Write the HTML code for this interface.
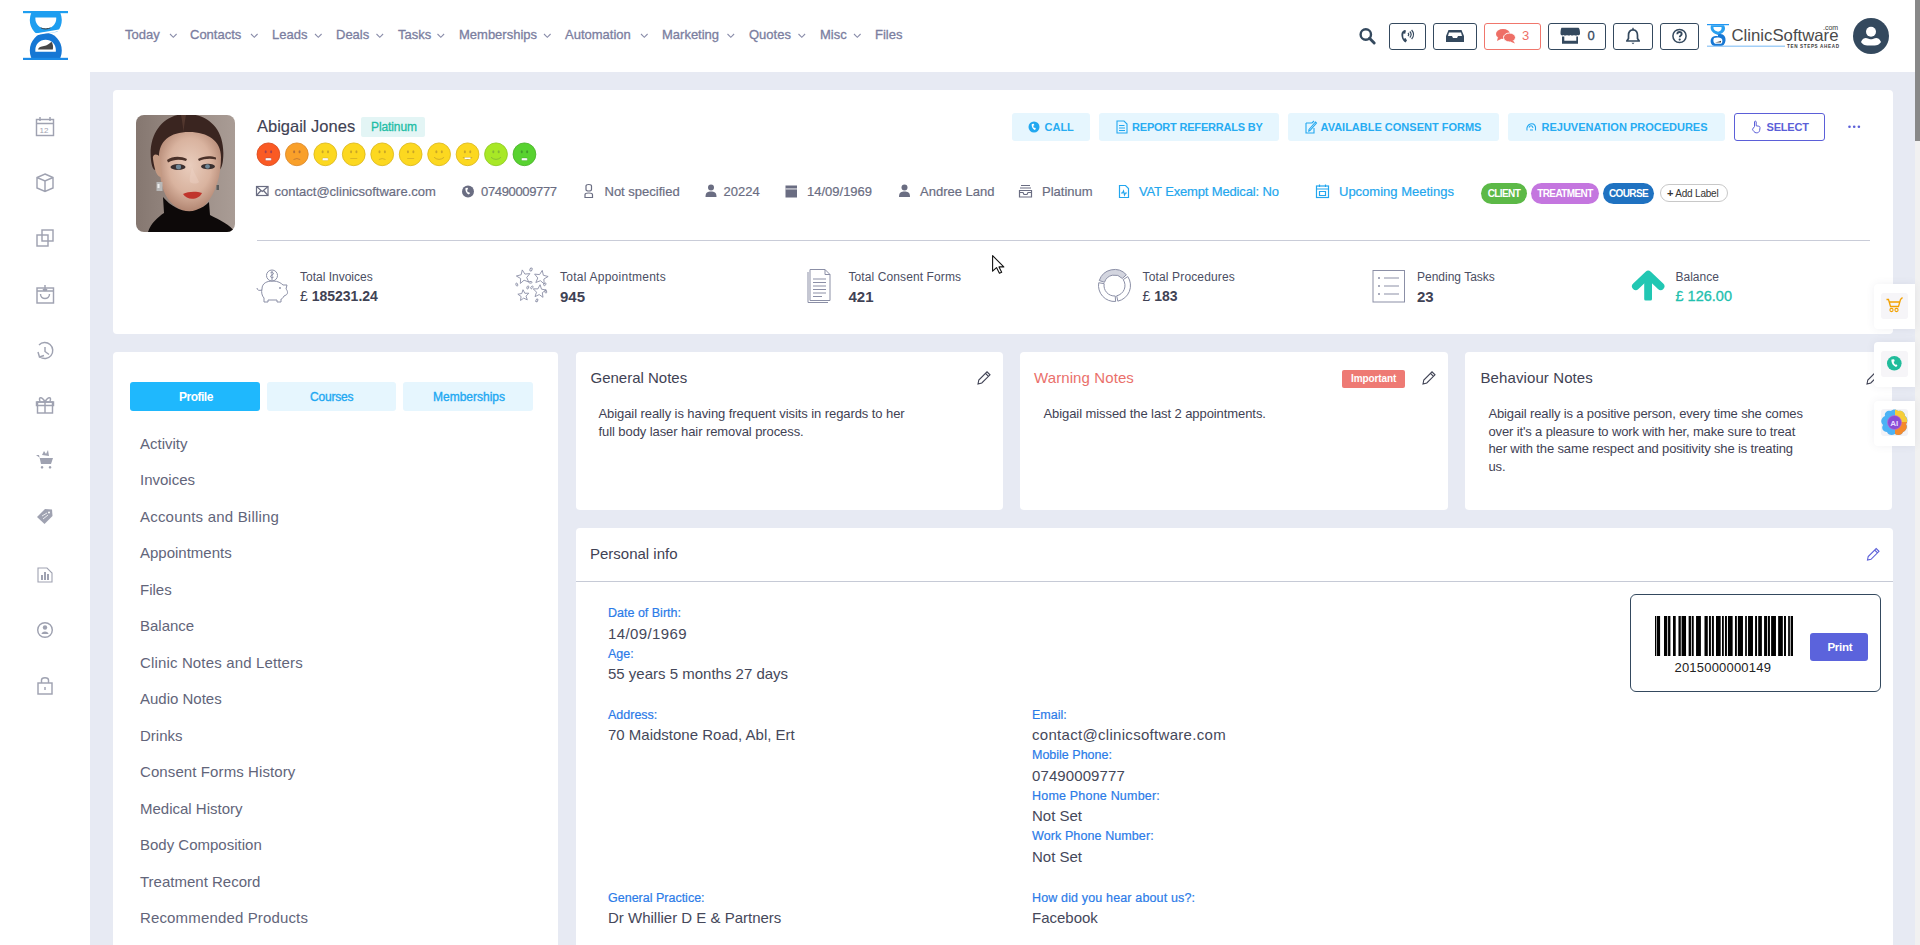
<!DOCTYPE html>
<html><head><meta charset="utf-8">
<style>
*{box-sizing:border-box;margin:0;padding:0}
html,body{width:1920px;height:945px;overflow:hidden;background:#e7eaf3;font-family:"Liberation Sans",sans-serif;color:#3f4254}
.a{position:absolute}
.t{position:absolute;white-space:nowrap;line-height:1}
#hdr{left:0;top:0;width:1915px;height:72px;background:#fff}
#side{left:0;top:72px;width:90px;height:873px;background:#fff}
#sb{left:1915px;top:0;width:5px;height:945px;background:#f1f1f1}
#sbt{left:1915px;top:0;width:5px;height:141px;background:#888}
.nav{color:#7b7ea0;font-size:13px;top:28px;-webkit-text-stroke:0.3px #7b7ea0}
.chev{position:absolute;top:33px;width:9px;height:5px}
.hb{position:absolute;top:23px;height:27px;border:1.5px solid #34495e;border-radius:3px}
.card{position:absolute;background:#fff;border-radius:4px}
.btn{position:absolute;top:113px;height:28px;background:#e6f6fe;border-radius:3px}
.bt{color:#27acf2;font-size:11px;top:122px;font-weight:700}
.info{color:#6a6d82;font-size:13px;top:185px;-webkit-text-stroke:0.2px currentColor}
.pill{position:absolute;top:183px;height:21px;border-radius:11px;color:#fff;font-size:10px;font-weight:700;line-height:21px;text-align:center;letter-spacing:-0.6px}
.sl{color:#4b4e63;font-size:12px;top:271px}
.sv{color:#3f4254;font-size:15px;top:289px;font-weight:700}
.li{color:#62657a;font-size:15px;left:140px;margin-top:-1px}
.nt{color:#3f4254;font-size:15px;top:370px}
.nb{color:#3f4254;font-size:13px;line-height:17.6px;position:absolute;white-space:nowrap}
.lab{color:#2b7be8;font-size:12.5px;-webkit-text-stroke:0.2px #2b7be8}
.val{color:#45485a;font-size:15px;margin-top:-1px}
</style></head>
<body>
<div id="hdr" class="a"></div>
<div id="side" class="a"></div>
<div id="sb" class="a"></div>
<div id="sbt" class="a"></div>
<!-- logo -->
<svg class="a" style="left:0;top:0" width="90" height="72" viewBox="0 0 90 72">
<defs><clipPath id="lc1"><rect x="0" y="13" width="90" height="45"/></clipPath>
<clipPath id="lc2"><path d="M0,13 L90,13 L90,30 L0,35.5 Z"/></clipPath></defs>
<g clip-path="url(#lc1)">
<path fill-rule="evenodd" fill="#1677d4" d="M29.8,50.6 A16,17.6 0 1 0 61.8,50.6 A16,17.6 0 1 0 29.8,50.6 Z M35.4,51.7 L55.8,51.7 C56.5,45 52,39.8 45.6,39.8 C39.2,39.8 34.7,45 35.4,51.7 Z"/>
<g clip-path="url(#lc2)">
<path fill-rule="evenodd" fill="#1e9ef0" d="M29.8,20.1 A16,16.9 0 1 0 61.8,20.1 A16,16.9 0 1 0 29.8,20.1 Z M35.4,17.4 L56.2,17.4 C56.8,24 52,28.5 45.8,28.5 C39.6,28.5 34.8,24 35.4,17.4 Z"/>
</g>
<path d="M28,35.6 L62,29.9" stroke="#fff" stroke-width="1.6"/>
</g>
<rect x="23" y="11" width="45" height="2.2" fill="#1e9ef0"/>
<rect x="23" y="57.8" width="45" height="2.2" fill="#1b8ae6"/>
<path d="M40.5,27.2 C43.5,28.8 48,28.8 50.7,27.2 L50,28.6 C47,29.8 44,29.8 41.2,28.6 Z" fill="#444"/>
<path d="M38,49.6 C38.5,47 41,46.5 44,46 C47,45.5 49,44 51.5,41.8 C53,44 53.5,47 52.8,49.6 Z" fill="#474747"/>
</svg>
<!-- nav -->
<div class="t nav" style="left:125px">Today</div>
<div class="t nav" style="left:190px">Contacts</div>
<div class="t nav" style="left:272px">Leads</div>
<div class="t nav" style="left:336px">Deals</div>
<div class="t nav" style="left:398px">Tasks</div>
<div class="t nav" style="left:459px">Memberships</div>
<div class="t nav" style="left:565px">Automation</div>
<div class="t nav" style="left:662px">Marketing</div>
<div class="t nav" style="left:749px">Quotes</div>
<div class="t nav" style="left:820px">Misc</div>
<div class="t nav" style="left:875px">Files</div>
<svg class="a" style="left:0;top:0" width="880" height="72" viewBox="0 0 880 72" fill="none" stroke="#8a8daa" stroke-width="1.1">
<path d="M170,34 L173.3,37.3 L176.6,34"/><path d="M251,34 L254.3,37.3 L257.6,34"/><path d="M315,34 L318.3,37.3 L321.6,34"/>
<path d="M376.5,34 L379.8,37.3 L383.1,34"/><path d="M437.5,34 L440.8,37.3 L444.1,34"/><path d="M544,34 L547.3,37.3 L550.6,34"/>
<path d="M641,34 L644.3,37.3 L647.6,34"/><path d="M727.5,34 L730.8,37.3 L734.1,34"/><path d="M798.5,34 L801.8,37.3 L805.1,34"/>
<path d="M854,34 L857.3,37.3 L860.6,34"/>
</svg>
<!-- search -->
<svg class="a" style="left:1356px;top:26px" width="22" height="20" viewBox="0 0 22 20">
<circle cx="9.8" cy="8.5" r="5.2" fill="none" stroke="#34495e" stroke-width="2.4"/>
<path d="M13.5,12.3 L18.2,17" stroke="#34495e" stroke-width="2.9" stroke-linecap="round"/>
</svg>
<div class="hb" style="left:1389px;width:37px"></div>
<svg class="a" style="left:1396px;top:27px" width="22" height="18" viewBox="0 0 22 18">
<path d="M8.5,3 C6,4 5,6 5.5,9 C6,12 7.5,14.5 9.5,15.5 L11,13.5 L9.5,11 L8,11.8 C7.2,10.5 7,8 7.5,6.5 L9.2,6.7 L10,3.5 Z" fill="#34495e"/>
<path d="M12,6 Q13.5,7.5 12,9" stroke="#34495e" stroke-width="1.2" fill="none"/>
<path d="M13.8,4.5 Q16.5,7.5 13.8,10.5" stroke="#34495e" stroke-width="1.2" fill="none"/>
<path d="M15.6,3 Q19.5,7.5 15.6,12" stroke="#34495e" stroke-width="1.2" fill="none"/>
</svg>
<div class="hb" style="left:1433px;width:44px"></div>
<svg class="a" style="left:1444px;top:28px" width="22" height="16" viewBox="0 0 22 16">
<path d="M4.5,2 L17.5,2 L20,8 L20,14 L2,14 L2,8 Z" fill="#34495e"/>
<path d="M5,4.5 L17,4.5 L18,8 L14,8 L13,10 L9,10 L8,8 L4,8 Z" fill="#fff"/>
</svg>
<div class="hb" style="left:1484px;width:57px;border-color:#f0766c"></div>
<svg class="a" style="left:1495px;top:27px" width="22" height="18" viewBox="0 0 22 18">
<ellipse cx="8" cy="7" rx="7" ry="5" fill="#ee6f66"/><path d="M3,10 L2,14 L7,11.5Z" fill="#ee6f66"/>
<ellipse cx="14.5" cy="10.5" rx="6" ry="4.5" fill="#ee6f66" stroke="#fff" stroke-width="1"/><path d="M18,13.5 L20,16.5 L15,14.5Z" fill="#ee6f66"/>
</svg>
<div class="t" style="left:1522px;top:29px;font-size:13px;color:#ee6f66">3</div>
<div class="hb" style="left:1548px;width:58px"></div>
<svg class="a" style="left:1555px;top:25px" width="30" height="22" viewBox="1555 25 30 22">
<path d="M1561.5,27.8 L1578.5,27.8 C1579.5,28 1580,31 1580,33.5 C1580,35.2 1578.5,35.8 1577.5,35 C1576.5,35.8 1575,35.8 1574,35 C1573,35.8 1571.5,35.8 1570.5,35 C1569.5,35.8 1568,35.8 1567,35 C1566,35.8 1564.5,35.8 1563.5,35 C1562.5,35.8 1560.5,35.5 1560.5,33.5 C1560.5,31 1561,28 1561.5,27.8Z" fill="#34495e"/>
<path d="M1562,36.5 L1564.3,36.5 L1564.3,40.7 L1576.3,40.7 L1576.3,36.5 L1578,36.5 L1578,43.8 L1562,43.8Z" fill="#34495e"/>
</svg>
<div class="t" style="left:1587.5px;top:29px;font-size:13px;color:#34495e;-webkit-text-stroke:0.3px #34495e">0</div>
<div class="hb" style="left:1613px;width:40px"></div>
<svg class="a" style="left:1624px;top:27px" width="18" height="19" viewBox="0 0 18 19">
<path d="M9,2.8 C5.8,2.8 4.5,5.5 4.5,8.5 L4.5,11.5 L2.8,14 L15.2,14 L13.5,11.5 L13.5,8.5 C13.5,5.5 12.2,2.8 9,2.8 Z" fill="none" stroke="#34495e" stroke-width="1.7" stroke-linejoin="round"/>
<path d="M7.5,15.8 L10.5,15.8 L9,17.3 Z" fill="#34495e"/><rect x="8.3" y="0.8" width="1.4" height="2" fill="#34495e"/>
</svg>
<div class="hb" style="left:1660px;width:39px"></div>
<svg class="a" style="left:1670px;top:27px" width="18" height="18" viewBox="0 0 18 18">
<circle cx="9.5" cy="9" r="6.6" fill="none" stroke="#34495e" stroke-width="1.5"/>
<path d="M7.3,7.2 C7.3,5.6 8.5,5 9.5,5 C10.8,5 11.7,5.8 11.7,7 C11.7,8.5 9.7,8.6 9.7,10.3" fill="none" stroke="#34495e" stroke-width="1.8"/>
<circle cx="9.7" cy="12.6" r="1.1" fill="#34495e"/>
</svg>
<!-- clinicsoftware logo -->
<svg class="a" style="left:1706px;top:20px" width="136" height="32" viewBox="0 0 136 32">
<g transform="translate(0,4) scale(1,0.88) translate(0,-3)"><rect x="1" y="3" width="22" height="1.4" fill="#2196f3"/>
<path d="M5,4.4 L18,4.4 C20,8 19,12 15,14 L12,15.5 L9,14 C5,12 4,8 5,4.4Z" fill="#2aa0f0"/>
<path d="M7.5,6.5 L15.5,6.5 C16,9 15,11 12,11.8 C9,11 7,9 7.5,6.5Z" fill="#fff"/>
<path d="M12,15 C17,13 20,17 19.5,22 C19,26 17,28 15,28 L8,28 C5,27 4,23 5,20 C6,17 9,16 12,17Z" fill="#1677d4"/>
<path d="M8,19 C10,18 14,18 16,20 C17,23 16,25 15,25.5 L9,25.5 C7,24 7,21 8,19Z" fill="#fff"/>
<path d="M9,24 L15,24 L15,22 L13,23 Z" fill="#444"/>
</g><rect x="1" y="25.6" width="78" height="1.2" fill="#8cc4f5"/>
<text x="25.5" y="21" font-family="Liberation Sans" font-size="16.5" fill="#4a4a4a" textLength="107" lengthAdjust="spacingAndGlyphs">ClinicSoftware</text>
<text x="117" y="10" font-family="Liberation Sans" font-size="7" fill="#3a3a3a">.com</text>
<text x="81" y="27.8" font-family="Liberation Sans" font-size="4.6" font-weight="700" fill="#3a3a3a" textLength="52" lengthAdjust="spacing">TEN STEPS AHEAD</text>
</svg>
<!-- avatar -->
<svg class="a" style="left:1853px;top:18px" width="36" height="36" viewBox="0 0 36 36">
<circle cx="18" cy="18" r="18" fill="#34495e"/>
<circle cx="18" cy="13.8" r="5" fill="#fff"/>
<path d="M8,24 C10,19.5 13,19.5 15,20.5 C16,21.5 20,21.5 21,20.5 C23,19.5 26,19.5 28,24 C26,27 24,27.5 18,27.5 C12,27.5 10,27 8,24Z" fill="#fff"/>
</svg>

<!-- profile card -->
<div class="card" style="left:113px;top:90px;width:1780px;height:244px"></div>
<svg class="a" style="left:136px;top:115px" width="99" height="117" viewBox="0 0 99 117">
<defs><clipPath id="pc"><rect x="0" y="0" width="99" height="117" rx="8"/></clipPath>
<linearGradient id="pbg" x1="0" y1="0" x2="1" y2="0"><stop offset="0" stop-color="#857770"/><stop offset="0.5" stop-color="#9a8c85"/><stop offset="1" stop-color="#a99c95"/></linearGradient>
<radialGradient id="skin" cx="0.5" cy="0.42" r="0.62"><stop offset="0" stop-color="#e9cdbd"/><stop offset="0.55" stop-color="#d9b39f"/><stop offset="1" stop-color="#a97c68"/></radialGradient></defs>
<g clip-path="url(#pc)">
<rect width="99" height="117" fill="url(#pbg)"/>
<path d="M15,45 C12,18 28,-1 50,-1 C74,-1 90,16 87,45 C86,54 83,58 80,52 L22,52 C19,58 16,54 15,45Z" fill="#3a2520"/>
<path d="M45,0 L50,0 C49,6 48,11 47.5,17 C47,11 46,6 45,0Z" fill="#6a4a3c" opacity="0.5"/>
<path d="M23,42 C23,26 34,17 53,17 C72,17 85,26 85,42 C85,60 80,78 70,89 C63,96 56,98 52,97 C46,96 38,92 32,84 C25,74 23,58 23,42Z" fill="url(#skin)"/>
<path d="M17,44 C16,39 21,38 24,42 L26,62 C22,63 19,58 17,44Z" fill="#c49a83"/>
<path d="M31,45 C37,40.5 45,41 51,44 L50,46 C44,44 38,44 32,47.5Z" fill="#4a3129"/>
<path d="M62,44 C68,40.5 75,40.5 80,42.5 L80,44.5 C75,43 68,43.5 63,46Z" fill="#4a3129"/>
<ellipse cx="42" cy="52" rx="7.5" ry="3" fill="#3a3030"/><ellipse cx="42.5" cy="52" rx="2.6" ry="2.4" fill="#6f8797"/>
<ellipse cx="72" cy="51.5" rx="7" ry="2.8" fill="#3a3030"/><ellipse cx="71.5" cy="51.5" rx="2.4" ry="2.3" fill="#6f8797"/>
<path d="M56,52 C55,58 53,63 54,67 C57,69 61,69 63,67 C61,62 58,58 56,52Z" fill="#f0d8ca" opacity="0.35"/>
<path d="M47,79 C52,76.5 60,76 66,78 C63,85 51,86 47,79Z" fill="#c0352c"/>
<path d="M20.5,67 L26.5,67 L26.5,76 L20.5,76Z" fill="#b8b8b8"/><rect x="21.5" y="69" width="2" height="4" fill="#eee"/>
<rect x="80.5" y="70" width="2.5" height="5" fill="#5a5a5a"/>
<path d="M27,82 C36,93 50,99 60,95 C66,93 70,90 73,87 L74,100 C84,105 94,110 99,117 L12,117 C15,108 22,102 28,98Z" fill="#0d0909"/>
</g></svg>
<div class="t" style="left:257px;top:118px;font-size:16.5px;color:#3f4254;-webkit-text-stroke:0.15px #3f4254">Abigail Jones</div>
<div class="a" style="left:361px;top:117px;width:64px;height:20px;background:#e3f5f5;border-radius:2px"></div>
<div class="t" style="left:371px;top:121px;font-size:12px;color:#1fbda5;letter-spacing:-0.1px;-webkit-text-stroke:0.3px #1fbda5">Platinum</div>
<svg class="a" style="left:250px;top:138px" width="300" height="32" viewBox="250 138 300 32"><circle cx="268.40" cy="154.3" r="11.4" fill="#fa5a24" stroke="#d8471a" stroke-width="0.8"/><ellipse cx="265.70" cy="151.8" rx="1" ry="1.5" fill="#8a3a5a" opacity="0.75"/><ellipse cx="271.10" cy="151.8" rx="1" ry="1.5" fill="#8a3a5a" opacity="0.75"/><rect x="265.40" y="158" width="6" height="2.4" rx="1" fill="#fff" stroke="#8a3a5a" stroke-width="0.5" stroke-opacity="0.6"/><circle cx="296.85" cy="154.3" r="11.4" fill="#f9a02a" stroke="#d9862a" stroke-width="0.8"/><ellipse cx="294.15" cy="151.8" rx="1" ry="1.5" fill="#a0603a" opacity="0.75"/><ellipse cx="299.55" cy="151.8" rx="1" ry="1.5" fill="#a0603a" opacity="0.75"/><path d="M293.55,159.5 Q296.85,157.6 300.15,159.5" fill="none" stroke="#a0603a" stroke-width="0.8" opacity="0.7"/><circle cx="325.30" cy="154.3" r="11.4" fill="#fcd820" stroke="#d9b51a" stroke-width="0.8"/><ellipse cx="322.60" cy="151.8" rx="1" ry="1.5" fill="#b8962a" opacity="0.75"/><ellipse cx="328.00" cy="151.8" rx="1" ry="1.5" fill="#b8962a" opacity="0.75"/><rect x="322.30" y="158" width="6" height="2.4" rx="1" fill="#fff" stroke="#b8962a" stroke-width="0.5" stroke-opacity="0.6"/><circle cx="353.75" cy="154.3" r="11.4" fill="#fcd820" stroke="#d9b51a" stroke-width="0.8"/><ellipse cx="351.05" cy="151.8" rx="1" ry="1.5" fill="#b8962a" opacity="0.75"/><ellipse cx="356.45" cy="151.8" rx="1" ry="1.5" fill="#b8962a" opacity="0.75"/><path d="M350.25,158.5 L357.25,158.5" fill="none" stroke="#b8962a" stroke-width="0.8" opacity="0.6"/><circle cx="382.20" cy="154.3" r="11.4" fill="#fcd820" stroke="#d9b51a" stroke-width="0.8"/><ellipse cx="379.50" cy="151.8" rx="1" ry="1.5" fill="#b8962a" opacity="0.75"/><ellipse cx="384.90" cy="151.8" rx="1" ry="1.5" fill="#b8962a" opacity="0.75"/><path d="M378.90,159.5 Q382.20,157.6 385.50,159.5" fill="none" stroke="#b8962a" stroke-width="0.8" opacity="0.7"/><circle cx="410.65" cy="154.3" r="11.4" fill="#fcd820" stroke="#d9b51a" stroke-width="0.8"/><ellipse cx="407.95" cy="151.8" rx="1" ry="1.5" fill="#b8962a" opacity="0.75"/><ellipse cx="413.35" cy="151.8" rx="1" ry="1.5" fill="#b8962a" opacity="0.75"/><path d="M407.15,158.5 L414.15,158.5" fill="none" stroke="#b8962a" stroke-width="0.8" opacity="0.6"/><circle cx="439.10" cy="154.3" r="11.4" fill="#fcd820" stroke="#d9b51a" stroke-width="0.8"/><ellipse cx="436.40" cy="151.8" rx="1" ry="1.5" fill="#b8962a" opacity="0.75"/><ellipse cx="441.80" cy="151.8" rx="1" ry="1.5" fill="#b8962a" opacity="0.75"/><path d="M434.10,157.3 Q439.10,161.5 444.10,157.3" fill="none" stroke="#b8962a" stroke-width="0.9" opacity="0.7"/><circle cx="467.55" cy="154.3" r="11.4" fill="#fcd820" stroke="#d9b51a" stroke-width="0.8"/><ellipse cx="464.85" cy="151.8" rx="1" ry="1.5" fill="#b8962a" opacity="0.75"/><ellipse cx="470.25" cy="151.8" rx="1" ry="1.5" fill="#b8962a" opacity="0.75"/><path d="M462.55,157.2 Q467.55,163 472.55,157.2 Z" fill="#b8962a" opacity="0.8"/><rect x="464.55" y="157.5" width="6" height="1.6" fill="#fff"/><circle cx="496.00" cy="154.3" r="11.4" fill="#a8e826" stroke="#8cc81e" stroke-width="0.8"/><ellipse cx="493.30" cy="151.8" rx="1" ry="1.5" fill="#78a83a" opacity="0.75"/><ellipse cx="498.70" cy="151.8" rx="1" ry="1.5" fill="#78a83a" opacity="0.75"/><path d="M491.00,157.3 Q496.00,161.5 501.00,157.3" fill="none" stroke="#78a83a" stroke-width="0.9" opacity="0.7"/><circle cx="524.45" cy="154.3" r="11.4" fill="#58d230" stroke="#46b026" stroke-width="0.8"/><ellipse cx="521.75" cy="151.8" rx="1" ry="1.5" fill="#3a8a2a" opacity="0.75"/><ellipse cx="527.15" cy="151.8" rx="1" ry="1.5" fill="#3a8a2a" opacity="0.75"/><rect x="521.45" y="158" width="6" height="2.4" rx="1" fill="#fff" stroke="#3a8a2a" stroke-width="0.5" stroke-opacity="0.6"/></svg>
<!-- info row -->
<svg class="a" style="left:250px;top:180px" width="1090" height="24" viewBox="250 180 1090 24">
<g fill="none" stroke="#6a6d82" stroke-width="1.2">
<rect x="256.5" y="186.5" width="11.5" height="9"/><path d="M256.5,186.5 L262.25,191.5 L268,186.5 M256.5,195.5 L261,190.5 M268,195.5 L263.5,190.5"/>
<path d="M586,186 C586,184 591.5,184 591.5,186 L591.5,189.5 C591.5,191.5 586,191.5 586,189.5Z M585,197.5 L585,194.5 C585,192.5 592.5,192.5 592.5,194.5 L592.5,197.5Z"/>
<path d="M1020,188 L1031,188 M1021,185.5 L1030,185.5 M1019.5,190.5 L1031.5,190.5 L1031.5,197 L1019.5,197Z M1019.5,192.5 L1023,192.5 L1024,194.5 L1027,194.5 L1028,192.5 L1031.5,192.5"/>
</g>
<g fill="#6a6d82">
<circle cx="468" cy="191.5" r="6"/>
<circle cx="711" cy="187.5" r="3"/><path d="M705.5,197 C705.5,192 708,191.5 711,191.5 C714,191.5 716.5,192 716.5,197Z"/>
<rect x="785.5" y="185.5" width="11.5" height="12"/>
<circle cx="904.5" cy="187.5" r="3"/><path d="M899,197 C899,192 901.5,191.5 904.5,191.5 C907.5,191.5 910,192 910,197Z"/>
</g>
<path d="M465.5,188 C465,190 466,193 468.5,194.5 L470,193.5 L469,192 L468,192.5 C467.3,191.5 467,190.5 467.2,189.5 L468.2,189.2 L467.6,187.7Z" fill="#fff"/>
<rect x="785.5" y="188.5" width="11.5" height="0.9" fill="#fff"/>
<g fill="none" stroke="#22a6ee" stroke-width="1.2">
<path d="M1119.5,185.5 L1125.5,185.5 L1128.5,188.5 L1128.5,197.5 L1119.5,197.5Z M1121,193 L1122.5,193 L1123.5,191 L1124.5,195 L1125.5,193 L1127,193"/>
<rect x="1316.5" y="186" width="12" height="11.5"/><path d="M1316.5,189 L1328.5,189 M1319.5,184.5 L1319.5,187 M1325.5,184.5 L1325.5,187 M1319.5,191.5 L1325.5,191.5 L1325.5,195.5 L1319.5,195.5Z"/>
</g>
</svg>
<div class="t info" style="left:274.5px">contact@clinicsoftware.com</div>
<div class="t info" style="left:481px;letter-spacing:-0.35px">07490009777</div>
<div class="t info" style="left:604.5px">Not specified</div>
<div class="t info" style="left:723.5px">20224</div>
<div class="t info" style="left:807px">14/09/1969</div>
<div class="t info" style="left:920px">Andree Land</div>
<div class="t info" style="left:1042px">Platinum</div>
<div class="t info" style="left:1139px;color:#22a6ee;letter-spacing:-0.15px">VAT Exempt Medical: No</div>
<div class="t info" style="left:1339px;color:#22a6ee">Upcoming Meetings</div>
<div class="pill" style="left:1481px;width:46px;background:#5cb947">CLIENT</div>
<div class="pill" style="left:1531px;width:68px;background:#c476df">TREATMENT</div>
<div class="pill" style="left:1603px;width:51px;background:#1f72c1">COURSE</div>
<div class="a" style="left:1660px;top:184px;width:68px;height:18px;border:1px solid #c8c8c8;border-radius:9px;background:#fff"></div>
<div class="t" style="left:1667px;top:188px;font-size:10px;color:#333;letter-spacing:-0.2px"><b style="font-size:11px">+</b> Add Label</div>
<!-- action buttons -->
<div class="btn" style="left:1012px;width:78px"></div>
<div class="btn" style="left:1099px;width:180px"></div>
<div class="btn" style="left:1288px;width:211px"></div>
<div class="btn" style="left:1508px;width:217px"></div>
<div class="a" style="left:1734px;top:113px;width:91px;height:28px;border:1.2px solid #5b5fd8;border-radius:3px"></div>
<svg class="a" style="left:1020px;top:115px" width="850" height="24" viewBox="1020 115 850 24">
<circle cx="1034" cy="127" r="5.5" fill="#22a8f0"/><path d="M1031.8,124 C1031.3,126 1032.3,128.8 1034.5,130 L1036,129 L1035,127.6 L1034,128 C1033.4,127.2 1033.2,126.3 1033.4,125.4 L1034.4,125.2 L1033.8,123.7Z" fill="#fff"/>
<g fill="none" stroke="#22a8f0" stroke-width="1.1">
<path d="M1117,121 L1124,121 L1127,124 L1127,133 L1117,133Z M1119,125.5 L1124.5,125.5 M1119,128 L1125,128 M1119,130.5 L1125,130.5"/>
<path d="M1306,123 L1312,123 L1314,121 M1306,123 L1306,133 L1314,133 L1314,128 M1309,129.5 L1315.5,122 L1316.5,123 L1310,130.5 L1308.8,131Z"/>
<path d="M1527,130.5 C1526,124 1534,121 1535.5,127 L1535.5,130.5 M1529,127.5 C1530,125 1532.5,125 1533,128 M1530,130 L1533,130"/>
</g>
<path d="M1754.5,126.5 L1754.5,122 C1754.5,120.8 1756.2,120.8 1756.2,122 L1756.2,125.8 L1758.8,126.2 C1760,126.4 1760,127.2 1760,128 L1759.6,130.6 C1759.2,132.2 1758,132.8 1756.8,132.8 L1756,132.8 C1754.8,132.8 1753,130.8 1752.5,129.2 Z" fill="none" stroke="#5b5fd8" stroke-width="1"/>
<g fill="#5b5fd8"><circle cx="1849.5" cy="126.8" r="1.3"/><circle cx="1854.2" cy="126.8" r="1.3"/><circle cx="1858.9" cy="126.8" r="1.3"/></g>
</svg>
<div class="t bt" style="left:1044.5px">CALL</div>
<div class="t bt" style="left:1132px;letter-spacing:-0.2px">REPORT REFERRALS BY</div>
<div class="t bt" style="left:1320.5px">AVAILABLE CONSENT FORMS</div>
<div class="t bt" style="left:1541.5px">REJUVENATION PROCEDURES</div>
<div class="t bt" style="left:1766.5px;color:#5b5fd8;letter-spacing:-0.2px">SELECT</div>
<div class="a" style="left:257px;top:240px;width:1613px;height:1px;background:#c9ccd8"></div>

<!-- stats -->
<svg class="a" style="left:250px;top:262px" width="1430" height="46" viewBox="250 262 1430 46">
<g fill="none" stroke="#8b8fa6" stroke-width="1">
<circle cx="272" cy="275.5" r="5.5"/><path d="M270.5,273 C270.5,272 273.5,272 273.5,273.5 C273.5,275 270.5,275 270.5,276.5 C270.5,278 273.5,278 273.5,277 M272,271 L272,280"/>
<path d="M262,289 C262,283 267,281 273,281 C278,281 281,283 283,285 L287,285 L286,289 C288,291 288,294 286,295 L284,296 C283,298 282,299 281,299 L281,302 L277,302 L277,300 L268,300 L268,302 L264,302 L264,298 C262,296 261,292 262,289Z"/>
<path d="M262,290 C259,291 257,290 257,288"/><circle cx="280" cy="288" r="0.6"/>
</g>
<g fill="none" stroke="#8b8fa6" stroke-width="0.9"><path d="M522.25,269.91 L524.92,274.09 L529.86,273.62 L526.71,277.45 L528.68,282.00 L524.06,280.19 L520.34,283.47 L520.64,278.52 L516.37,276.00 L521.17,274.75Z"/><path d="M542.25,270.41 L543.33,275.25 L548.13,276.50 L543.86,279.02 L544.16,283.97 L540.44,280.69 L535.82,282.50 L537.79,277.95 L534.64,274.12 L539.58,274.59Z"/><path d="M522.99,289.72 L524.84,293.26 L528.84,293.23 L526.04,296.09 L527.31,299.88 L523.73,298.10 L520.51,300.47 L521.10,296.52 L517.85,294.20 L521.79,293.53Z"/><path d="M540.09,284.73 L541.51,289.19 L546.13,289.97 L542.32,292.70 L543.00,297.33 L539.23,294.55 L535.04,296.63 L536.52,292.19 L533.24,288.84 L537.92,288.88Z"/><rect x="530" y="268" width="2" height="3" rx="1" transform="rotate(30 531 269.5)"/><rect x="529" y="281.5" width="3" height="1.6" rx="0.8"/><rect x="516" y="283" width="1.6" height="3" rx="0.8" transform="rotate(-20 517 284.5)"/><rect x="527" y="286" width="1.6" height="3" rx="0.8" transform="rotate(20 528 287.5)"/><rect x="531" y="286" width="1.6" height="3" rx="0.8" transform="rotate(40 532 287.5)"/><rect x="544" y="283" width="1.6" height="3" rx="0.8" transform="rotate(50 545 284.5)"/><rect x="545" y="290" width="1.6" height="3" rx="0.8" transform="rotate(-10 546 291.5)"/><rect x="536" y="299" width="1.6" height="3" rx="0.8" transform="rotate(30 537 300.5)"/></g>
<g fill="none" stroke="#8b8fa6" stroke-width="1">
<path d="M810,269.5 L825,269.5 L830,274.5 L830,300.5 L810,300.5Z M825,269.5 L825,274.5 L830,274.5"/>
<path d="M808,272 L808,302.5 L828,302.5" />
<path d="M813,279 L826,279 M813,282.5 L826,282.5 M813,286 L826,286 M813,289.5 L826,289.5 M813,293 L826,293 M813,296.5 L822,296.5"/>
</g>
<path d="M1099.28,280.56 A16,16 0 0 1 1126.39,274.79 L1122.30,278.47 A10.5,10.5 0 0 0 1104.51,282.26 Z" fill="#d3d5df" stroke="#8b8fa6" stroke-width="1"/><path d="M1127.76,276.55 A16,16 0 0 1 1117.83,301.15 L1116.68,295.77 A10.5,10.5 0 0 0 1123.20,279.63 Z" fill="none" stroke="#8b8fa6" stroke-width="1"/><path d="M1115.62,301.46 A16,16 0 0 1 1098.74,282.72 L1104.16,283.68 A10.5,10.5 0 0 0 1115.23,295.97 Z" fill="none" stroke="#8b8fa6" stroke-width="1"/>
<g fill="none" stroke="#8b8fa6" stroke-width="1">
<rect x="1373" y="270.5" width="31.5" height="31.5"/>
<path d="M1384,278 L1399,278 M1384,286 L1399,286 M1384,294 L1399,294"/>
</g>
<g fill="#8b8fa6"><circle cx="1379" cy="278" r="1"/><circle cx="1379" cy="286" r="1"/><circle cx="1379" cy="294" r="1"/></g>
<path d="M1635.8,286.3 L1648.2,274.6 L1660.6,286.3" fill="none" stroke="#22c7b3" stroke-width="7.6" stroke-linecap="round" stroke-linejoin="round"/><rect x="1644.2" y="276" width="7.8" height="24.6" rx="1.5" fill="#22c7b3"/>
</svg>
<div class="t sl" style="left:300px">Total Invoices</div>
<div class="t sv" style="left:300px;font-size:14px"><span style="font-weight:400">£</span> 185231.24</div>
<div class="t sl" style="left:560px;letter-spacing:0.25px">Total Appointments</div>
<div class="t sv" style="left:560px">945</div>
<div class="t sl" style="left:848.5px;letter-spacing:0.1px">Total Consent Forms</div>
<div class="t sv" style="left:848.5px">421</div>
<div class="t sl" style="left:1142.5px;letter-spacing:0.15px">Total Procedures</div>
<div class="t sv" style="left:1142.5px;font-size:14px"><span style="font-weight:400">£</span> 183</div>
<div class="t sl" style="left:1417px">Pending Tasks</div>
<div class="t sv" style="left:1417px">23</div>
<div class="t sl" style="left:1675.5px">Balance</div>
<div class="t sv" style="left:1675.5px;color:#22c0ae;font-weight:400;font-size:14.5px;-webkit-text-stroke:0.3px #22c0ae">£ 126.00</div>

<!-- sidebar icons -->
<svg class="a" style="left:0;top:100px" width="90" height="610" viewBox="0 100 90 610">
<g fill="none" stroke="#9fa2b1" stroke-width="1.45">
<rect x="36.5" y="119.5" width="17" height="16"/><path d="M36.5,123.5 L53.5,123.5 M40,117 L40,121 M50,117 L50,121"/>
<path d="M45,174 L53,177.5 L53,188 L45,191.5 L37,188 L37,177.5Z M37,177.5 L45,181 L53,177.5 M45,181 L45,191.5"/>
<rect x="37" y="235" width="11" height="11"/><rect x="42" y="230" width="11" height="11"/>
<rect x="37" y="288" width="16.5" height="15"/><path d="M37,291 L53.5,291 M40.5,294 C40.5,300 49.5,300 49.5,294 M45,285 L45,291 M43,289 L45,291 L47,289"/>
<path d="M39,345 A8,8 0 1 1 40,357 M38,352 L39.5,357 L44,355.5 M45,347 L45,351.5 L49,354.5"/>
<rect x="37.5" y="402" width="15" height="11"/><path d="M36.5,402 L53.5,402 L53.5,405.5 L36.5,405.5Z M45,402 L45,413 M45,402 C42,396 38,397 40,401 M45,402 C48,396 52,397 50,401"/>
<circle cx="45" cy="630" r="7.3"/>
<rect x="38" y="683" width="14" height="11"/><path d="M41.5,683 L41.5,680 C41.5,677 48.5,677 48.5,680 L48.5,683 M45,687 L45,690"/>
</g>
<g fill="#9fa2b1">
<text x="39.5" y="133" font-family="Liberation Sans" font-size="8" fill="#9fa2b1">12</text>
<path d="M36,455 L39,455 L41,464 L51,464 L53,458 L40,458 M42,466 A1.3,1.3 0 1 0 42.1,466 M50,466 A1.3,1.3 0 1 0 50.1,466"/>
<path d="M42,455 L44,451 L46,454 L48,450 L49,456Z"/>
<path d="M37,517 L45,509 L52,509.5 L52.5,516 L44.5,524Z" />
<path d="M38,568 L47,568 L52,573 L52,582 L38,582Z" fill="none" stroke="#9fa2b1" stroke-width="1.1"/>
<rect x="41" y="575" width="2" height="5"/><rect x="44" y="572" width="2" height="8"/><rect x="47" y="574" width="2" height="6"/>
<circle cx="45" cy="627.5" r="2.2"/><path d="M41.5,634 C41.5,630.5 48.5,630.5 48.5,634Z"/>
</g>
<g fill="#fff"><circle cx="49" cy="512.5" r="1"/><path d="M42,516 L47,513 M43,519 L48,515" stroke="#fff" stroke-width="0.8"/></g>
</svg>
<!-- left panel -->
<div class="card" style="left:113px;top:352px;width:445px;height:600px"></div>
<div class="a" style="left:130px;top:382px;width:130px;height:29px;background:#1fb8fd;border-radius:3px"></div>
<div class="a" style="left:267px;top:382px;width:129px;height:29px;background:#e6f6fe;border-radius:3px"></div>
<div class="a" style="left:403px;top:382px;width:130px;height:29px;background:#e6f6fe;border-radius:3px"></div>
<div class="t" style="left:179px;top:391px;font-size:12px;font-weight:700;color:#fff;letter-spacing:-0.5px">Profile</div>
<div class="t" style="left:310px;top:391px;font-size:12px;color:#1ea8f2;letter-spacing:-0.2px;-webkit-text-stroke:0.35px #1ea8f2">Courses</div>
<div class="t" style="left:433px;top:391px;font-size:12px;color:#1ea8f2;-webkit-text-stroke:0.35px #1ea8f2">Memberships</div>
<div class="t li" style="top:436.5px">Activity</div>
<div class="t li" style="top:473px">Invoices</div>
<div class="t li" style="top:509.5px;letter-spacing:0.2px">Accounts and Billing</div>
<div class="t li" style="top:546px">Appointments</div>
<div class="t li" style="top:582.5px">Files</div>
<div class="t li" style="top:619px">Balance</div>
<div class="t li" style="top:655.5px;letter-spacing:0.15px">Clinic Notes and Letters</div>
<div class="t li" style="top:692px">Audio Notes</div>
<div class="t li" style="top:728.5px">Drinks</div>
<div class="t li" style="top:765px;letter-spacing:0.1px">Consent Forms History</div>
<div class="t li" style="top:801.5px">Medical History</div>
<div class="t li" style="top:838px">Body Composition</div>
<div class="t li" style="top:874.5px">Treatment Record</div>
<div class="t li" style="top:911px;letter-spacing:0.15px">Recommended Products</div>

<!-- notes cards -->
<div class="card" style="left:576px;top:352px;width:427px;height:158px"></div>
<div class="card" style="left:1020px;top:352px;width:428px;height:158px"></div>
<div class="card" style="left:1465px;top:352px;width:427px;height:158px"></div>
<div class="t nt" style="left:590.5px">General Notes</div>
<div class="t nt" style="left:1034px;color:#ea706b;letter-spacing:0.1px">Warning Notes</div>
<div class="t nt" style="left:1480.5px;letter-spacing:0.1px">Behaviour Notes</div>
<div class="a" style="left:1342px;top:370px;width:63px;height:18px;background:#ee7a74;border-radius:2px"></div>
<div class="t" style="left:1351px;top:374px;font-size:10px;font-weight:700;color:#fff;letter-spacing:-0.1px">Important</div>
<div class="nb" style="left:598.5px;top:405px;letter-spacing:-0.08px">Abigail really is having frequent visits in regards to her<br>full body laser hair removal process.</div>
<div class="nb" style="left:1043.5px;top:405px;letter-spacing:-0.08px">Abigail missed the last 2 appointments.</div>
<div class="nb" style="left:1488.5px;top:405px;letter-spacing:-0.14px">Abigail really is a positive person, every time she comes<br>over it's a pleasure to work with her, make sure to treat<br>her with the same respect and positivity she is treating<br>us.</div>
<svg class="a" style="left:970px;top:365px" width="920" height="30" viewBox="970 365 920 30">
<g fill="none" stroke="#3f4254" stroke-width="1.1">
<path d="M978,384 L978.8,380 L987,371.8 L990,374.8 L981.8,383 Z M985.5,373.3 L988.5,376.3"/>
<path d="M1423,384 L1423.8,380 L1432,371.8 L1435,374.8 L1426.8,383 Z M1430.5,373.3 L1433.5,376.3"/>
<path d="M1867,384 L1867.8,380 L1876,371.8 L1879,374.8 L1870.8,383 Z M1874.5,373.3 L1877.5,376.3"/>
</g>
</svg>
<!-- personal info -->
<div class="card" style="left:576px;top:528px;width:1317px;height:430px"></div>
<div class="t" style="left:590px;top:545.5px;font-size:15px;color:#3f4254">Personal info</div>
<div class="a" style="left:576px;top:580.5px;width:1317px;height:1px;background:#c6cad6"></div>
<svg class="a" style="left:1860px;top:540px" width="30" height="25" viewBox="1860 540 30 25">
<path d="M1867.5,560 L1868.2,556.5 L1876.2,548.5 L1879,551.3 L1871,559.3 Z M1874.7,550 L1877.5,552.8" fill="none" stroke="#5b5fd8" stroke-width="1.1"/>
</svg>
<div class="t lab" style="left:608px;top:606.5px">Date of Birth:</div>
<div class="t val" style="left:608px;top:626.5px;letter-spacing:0.4px">14/09/1969</div>
<div class="t lab" style="left:608px;top:647.5px">Age:</div>
<div class="t val" style="left:608px;top:666.5px">55 years 5 months 27 days</div>
<div class="t lab" style="left:608px;top:708.5px">Address:</div>
<div class="t val" style="left:608px;top:727.5px">70 Maidstone Road, Abl, Ert</div>
<div class="t lab" style="left:1032px;top:708.5px">Email:</div>
<div class="t val" style="left:1032px;top:727.5px;letter-spacing:0.3px">contact@clinicsoftware.com</div>
<div class="t lab" style="left:1032px;top:748.5px">Mobile Phone:</div>
<div class="t val" style="left:1032px;top:768.5px;letter-spacing:0.1px">07490009777</div>
<div class="t lab" style="left:1032px;top:789.5px;letter-spacing:0.2px">Home Phone Number:</div>
<div class="t val" style="left:1032px;top:808.5px">Not Set</div>
<div class="t lab" style="left:1032px;top:829.5px;letter-spacing:0.1px">Work Phone Number:</div>
<div class="t val" style="left:1032px;top:849.5px">Not Set</div>
<div class="t lab" style="left:608px;top:891.5px">General Practice:</div>
<div class="t val" style="left:608px;top:910.5px;letter-spacing:0px">Dr Whillier D E &amp; Partners</div>
<div class="t lab" style="left:1032px;top:891.5px;letter-spacing:0.15px">How did you hear about us?:</div>
<div class="t val" style="left:1032px;top:910.5px">Facebook</div>
<!-- barcode -->
<div class="a" style="left:1629.5px;top:594px;width:251.5px;height:97.5px;border:1px solid #34495e;border-radius:6px;background:#fff"></div>
<svg class="a" style="left:1655px;top:615.5px" width="138" height="40.5" viewBox="65 70 1765 518" preserveAspectRatio="none"><g fill="#000"><rect x="65" y="70" width="17" height="518"/><rect x="90" y="70" width="40" height="518"/><rect x="180" y="70" width="42" height="518"/><rect x="232" y="70" width="30" height="518"/><rect x="295" y="70" width="35" height="518"/><rect x="365" y="70" width="30" height="518"/><rect x="405" y="70" width="57" height="518"/><rect x="495" y="70" width="30" height="518"/><rect x="535" y="70" width="25" height="518"/><rect x="590" y="70" width="62" height="518"/><rect x="698" y="70" width="42" height="518"/><rect x="755" y="70" width="25" height="518"/><rect x="793" y="70" width="25" height="518"/><rect x="845" y="70" width="60" height="518"/><rect x="922" y="70" width="23" height="518"/><rect x="960" y="70" width="25" height="518"/><rect x="998" y="70" width="60" height="518"/><rect x="1088" y="70" width="24" height="518"/><rect x="1125" y="70" width="65" height="518"/><rect x="1218" y="70" width="22" height="518"/><rect x="1255" y="70" width="63" height="518"/><rect x="1345" y="70" width="25" height="518"/><rect x="1385" y="70" width="47" height="518"/><rect x="1460" y="70" width="40" height="518"/><rect x="1510" y="70" width="25" height="518"/><rect x="1550" y="70" width="62" height="518"/><rect x="1640" y="70" width="60" height="518"/><rect x="1715" y="70" width="25" height="518"/><rect x="1768" y="70" width="22" height="518"/><rect x="1800" y="70" width="30" height="518"/></g></svg>
<div class="t" style="left:1674.5px;top:661px;font-size:13px;color:#222;letter-spacing:0.2px">2015000000149</div>
<div class="a" style="left:1810px;top:633px;width:58px;height:28px;background:#5b63dc;border-radius:3px"></div>
<div class="t" style="left:1827.5px;top:641.5px;font-size:11.5px;font-weight:700;color:#fff;letter-spacing:-0.3px">Print</div>
<!-- floating widgets -->
<div class="a" style="left:1874px;top:284px;width:41px;height:45px;background:#fff;border-radius:4px 0 0 4px;box-shadow:0 0 8px rgba(60,60,100,0.08)"></div>
<div class="a" style="left:1874px;top:342px;width:41px;height:45px;background:#fff;border-radius:4px 0 0 4px;box-shadow:0 0 8px rgba(60,60,100,0.08)"></div>
<div class="a" style="left:1874px;top:401px;width:41px;height:45px;background:#fff;border-radius:4px 0 0 4px;box-shadow:0 0 8px rgba(60,60,100,0.08)"></div>
<div class="a" style="left:1881px;top:292.5px;width:26.5px;height:26.5px;background:#f6f5f8;border-radius:3px"></div>
<div class="a" style="left:1881px;top:350.5px;width:26.5px;height:26.5px;background:#f6f5f8;border-radius:3px"></div>
<svg class="a" style="left:1881px;top:292px" width="27" height="27" viewBox="0 0 27 27">
<path d="M5.5,7.5 L7.5,7.5 L9.5,14.5 L17.5,14.5 L19.5,7.5 M8.2,10 L18.7,10 M19.5,7.5 L21.5,5.5" fill="none" stroke="#f2a100" stroke-width="1.3"/>
<circle cx="10.5" cy="18" r="1.6" fill="none" stroke="#f2a100" stroke-width="1.1"/><circle cx="15.5" cy="18" r="1.6" fill="none" stroke="#f2a100" stroke-width="1.1"/>
</svg>
<svg class="a" style="left:1881px;top:350px" width="27" height="27" viewBox="0 0 27 27">
<circle cx="13.3" cy="13.3" r="7.3" fill="#21bc9b"/>
<path d="M10.5,9.5 C10,12 11.5,15.5 15,17 L16.5,15.8 L15.3,14.2 L14.3,14.8 C13.3,14 12.7,12.8 12.8,11.6 L13.8,11.2 L13.1,9.3Z" fill="#fff"/>
</svg>
<div class="a" style="left:1881px;top:409px;width:26.5px;height:27px;background:#f3f3f7;border-radius:3px"></div>
<svg class="a" style="left:1879px;top:407px" width="31" height="31" viewBox="0 0 31 31">
<path d="M6,9 C5,5 9,3 12,4 C14,2 17,2 19,4 C22,3 26,5 26,9 C29,11 29,15 27,17 C29,20 27,24 24,25 C23,28 19,29 16,27 C13,29 9,28 8,25 C4,25 2,21 4,18 C1,15 2,11 6,9Z" fill="#4cb2f5"/>
<path d="M16,2.8 C17,2.5 18,3 19,4 C22,3 26,5 26,9 C28,10.5 28.5,13 28,15 L16,15Z" fill="#f6cd3a"/>
<path d="M16,15 L28,15 C28,16 27.5,16.5 27,17 C29,20 27,24 24,25 C23,28 19,29 16,27Z" fill="#f58a2c"/>
<circle cx="15.5" cy="15.5" r="7" fill="#8a4dd6"/>
<circle cx="15.5" cy="15.5" r="7" fill="none" stroke="#c46fd0" stroke-width="1" opacity="0.6"/>
<text x="11.2" y="18.6" font-family="Liberation Sans" font-size="8" font-weight="700" fill="#e8dcff">AI</text>
</svg>
<svg class="a" style="left:985px;top:250px" width="25" height="28" viewBox="985 250 25 28">
<path d="M992.6,255.6 L992.6,271.2 L996.5,267.6 L999.4,273.2 L1001.7,272.2 L999,266.9 L1003.8,266.9 Z" fill="#fff" stroke="#111" stroke-width="1.1" stroke-linejoin="round"/>
</svg>
</body></html>
